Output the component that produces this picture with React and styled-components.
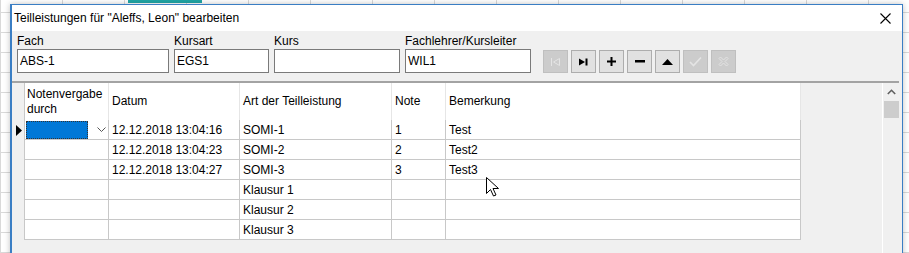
import React from "react";
import styled, { createGlobalStyle } from "styled-components";

const GlobalStyle = createGlobalStyle`
  html, body {
    margin: 0;
    padding: 0;
    background: #ffffff;
    overflow: hidden;
  }
  body {
    font-family: "Liberation Sans", Arial, sans-serif;
    font-size: 12px;
    color: #000;
  }
`;

const Desktop = styled.div`
  position: relative;
  width: 909px;
  height: 253px;
  overflow: hidden;
  padding: 4px 6px 0 10px;
  box-sizing: border-box;
  background-color: #ffffff;
  background-image:
    linear-gradient(90deg, transparent 128px, #21a6a6 128px, #21a6a6 202px, transparent 202px),
    repeating-linear-gradient(0deg, #d9d9d9 0 1px, transparent 1px 20px),
    repeating-linear-gradient(90deg, #d9d9d9 0 1px, transparent 1px 62px);
  background-size: 909px 3px, 909px 253px, 909px 253px;
  background-repeat: no-repeat;
`;

const Dialog = styled.div`
  height: 260px;
  border: 1px solid #3a7ec4;
  border-left-width: 2px;
  background: #f0f0f0;
  display: flex;
  flex-direction: column;
  box-shadow: 0 0 6px rgba(0, 0, 0, 0.25);
`;

const TitleBar = styled.div`
  height: 26px;
  background: #ffffff;
  display: flex;
  align-items: center;
  justify-content: space-between;
  padding: 0 11px 0 2px;
  flex-shrink: 0;
`;

const Title = styled.span`
  font-size: 12px;
`;

const Fields = styled.div`
  display: flex;
  align-items: flex-end;
  gap: 5px;
  padding: 3px 0 0 5px;
`;

const Field = styled.div`
  display: flex;
  flex-direction: column;
  width: ${(p) => p.$w}px;
`;

const Label = styled.div`
  height: 15px;
  line-height: 15px;
`;

const Input = styled.div`
  height: 24px;
  box-sizing: border-box;
  border: 1px solid #7a7a7a;
  background: #fff;
  padding: 0 2px;
  display: flex;
  align-items: center;
`;

const Toolbar = styled.div`
  display: flex;
  gap: 3px;
  margin-left: 7px;
`;

const ToolButton = styled.div`
  width: 25px;
  height: 23px;
  box-sizing: border-box;
  border: 1px solid ${(p) => (p.$disabled ? "#bfbfbf" : "#adadad")};
  background: ${(p) => (p.$disabled ? "#cccccc" : "#e1e1e1")};
  display: flex;
  align-items: center;
  justify-content: center;
`;

const GridControl = styled.div`
  margin: 8px 3px 0 0;
  border-top: 2px solid #a3a3a3;
  display: flex;
  flex: 1;
  min-height: 0;
  background: #f0f0f0;
`;

const RowHeaders = styled.div`
  width: 12px;
  display: flex;
  flex-direction: column;
`;

const RowHeader = styled.div`
  height: ${(p) => p.$h}px;
  display: flex;
  align-items: center;
  justify-content: flex-start;
  padding-left: 4px;
`;

const Table = styled.div`
  display: grid;
  grid-template-columns: 84px 131px 152px 54px 355px;
  grid-auto-rows: 20px;
  grid-template-rows: 37px;
  border-left: 1px solid #c8c8c8;
  align-self: flex-start;
  background: #fff;
`;

const HeadCell = styled.div`
  border-right: 1px solid #e6e6e6;
  display: flex;
  align-items: center;
  padding: 0 1px 0 ${(p) => (p.$first ? 2 : 3)}px;
  line-height: 15px;
  background: #fff;
`;

const Cell = styled.div`
  border-right: 1px solid #c8c8c8;
  border-bottom: 1px solid #c8c8c8;
  display: flex;
  align-items: center;
  padding-left: 3px;
  white-space: nowrap;
  overflow: hidden;
`;

const ComboCell = styled.div`
  border-right: 1px solid #c8c8c8;
  border-bottom: 1px solid #c8c8c8;
  display: flex;
  align-items: center;
  padding: 1px 0 1px 1px;
`;

const Selected = styled.div`
  width: 60px;
  height: 16px;
  background: #0078d7;
  border: 1px dotted #333;
`;

const Chevron = styled.div`
  flex: 1;
  display: flex;
  justify-content: center;
  padding-left: 6px;
`;

const Filler = styled.div`
  flex: 1;
`;

const Scrollbar = styled.div`
  width: 16px;
  border-left: 1px solid #ffffff;
  background: #f0f0f0;
  display: flex;
  flex-direction: column;
  align-items: center;
`;

const ScrollArrow = styled.div`
  height: 18px;
  display: flex;
  align-items: center;
  justify-content: center;
`;

const Thumb = styled.div`
  width: 15px;
  height: 17px;
  background: #cdcdcd;
`;

const Cursor = styled.svg`
  position: absolute;
  left: 486px;
  top: 177px;
`;

const CloseIcon = () => (
  <svg width="11" height="11" viewBox="0 0 11 11">
    <path d="M0.5 0.5L10.5 10.5M10.5 0.5L0.5 10.5" stroke="#000" strokeWidth="1.1" />
  </svg>
);

const icons = {
  first: (
    <svg width="11" height="10" viewBox="0 0 11 10">
      <path d="M1.5 1V9M9.5 1.5L3.5 5L9.5 8.5Z" stroke="#e4e4e4" strokeWidth="1" fill="none" />
    </svg>
  ),
  last: (
    <svg width="11" height="10" viewBox="0 0 11 10">
      <path d="M1 1.5L7 5L1 8.5Z" fill="#000" />
      <rect x="7.5" y="1.5" width="2" height="7" fill="#000" />
    </svg>
  ),
  plus: (
    <svg width="9" height="9" viewBox="0 0 9 9">
      <path d="M3.5 0H5.5V3.5H9V5.5H5.5V9H3.5V5.5H0V3.5H3.5Z" fill="#000" />
    </svg>
  ),
  minus: (
    <svg width="10" height="3" viewBox="0 0 10 3">
      <rect width="10" height="2.5" fill="#000" />
    </svg>
  ),
  up: (
    <svg width="11" height="6" viewBox="0 0 11 6">
      <path d="M5.5 0L11 6H0Z" fill="#000" />
    </svg>
  ),
  check: (
    <svg width="13" height="11" viewBox="0 0 13 11">
      <path d="M1 6L4.5 9.5L12 1.5" stroke="#e4e4e4" strokeWidth="1.6" fill="none" />
    </svg>
  ),
  cancel: (
    <svg width="11" height="11" viewBox="0 0 11 11">
      <path
        d="M1 2.5L2.5 1L5.5 4L8.5 1L10 2.5L7 5.5L10 8.5L8.5 10L5.5 7L2.5 10L1 8.5L4 5.5Z"
        stroke="#e4e4e4"
        strokeWidth="1"
        fill="none"
      />
    </svg>
  ),
};

const buttons = [
  ["first", true],
  ["last", false],
  ["plus", false],
  ["minus", false],
  ["up", false],
  ["check", true],
  ["cancel", true],
];

const fields = [
  { label: "Fach", value: "ABS-1", w: 152 },
  { label: "Kursart", value: "EGS1", w: 95 },
  { label: "Kurs", value: "", w: 126 },
  { label: "Fachlehrer/Kursleiter", value: "WIL1", w: 126 },
];

const headers = ["Notenvergabe durch", "Datum", "Art der Teilleistung", "Note", "Bemerkung"];

const rows = [
  ["12.12.2018 13:04:16", "SOMI-1", "1", "Test"],
  ["12.12.2018 13:04:23", "SOMI-2", "2", "Test2"],
  ["12.12.2018 13:04:27", "SOMI-3", "3", "Test3"],
  ["", "Klausur 1", "", ""],
  ["", "Klausur 2", "", ""],
  ["", "Klausur 3", "", ""],
];

export default function App() {
  return (
    <>
      <GlobalStyle />
      <Desktop>
        <Dialog>
          <TitleBar>
            <Title>Teilleistungen für "Aleffs, Leon" bearbeiten</Title>
            <CloseIcon />
          </TitleBar>

          <Fields>
            {fields.map((f) => (
              <Field key={f.label} $w={f.w}>
                <Label>{f.label}</Label>
                <Input>{f.value}</Input>
              </Field>
            ))}
            <Toolbar>
              {buttons.map(([name, disabled]) => (
                <ToolButton key={name} $disabled={disabled}>
                  {icons[name]}
                </ToolButton>
              ))}
            </Toolbar>
          </Fields>

          <GridControl>
            <RowHeaders>
              <RowHeader $h={37} />
              <RowHeader $h={20}>
                <svg width="6" height="11" viewBox="0 0 6 11">
                  <path d="M0 0L6 5.5L0 11Z" fill="#000" />
                </svg>
              </RowHeader>
            </RowHeaders>

            <Table>
              {headers.map((h, i) => (
                <HeadCell key={h} $first={i === 0}>
                  {h}
                </HeadCell>
              ))}
              {rows.map((r, ri) => (
                <React.Fragment key={ri}>
                  {ri === 0 ? (
                    <ComboCell>
                      <Selected />
                      <Chevron>
                        <svg width="9" height="5" viewBox="0 0 9 5">
                          <path d="M0.5 0.5L4.5 4.5L8.5 0.5" stroke="#555" strokeWidth="1" fill="none" />
                        </svg>
                      </Chevron>
                    </ComboCell>
                  ) : (
                    <Cell />
                  )}
                  {r.map((c, ci) => (
                    <Cell key={ci}>{c}</Cell>
                  ))}
                </React.Fragment>
              ))}
            </Table>

            <Filler />

            <Scrollbar>
              <ScrollArrow>
                <svg width="9" height="6" viewBox="0 0 9 6">
                  <path d="M0.8 5L4.5 1.3L8.2 5" stroke="#606060" strokeWidth="1.6" fill="none" />
                </svg>
              </ScrollArrow>
              <Thumb />
            </Scrollbar>
          </GridControl>
        </Dialog>

        <Cursor width="13" height="20" viewBox="0 0 13 20">
          <path
            d="M0.5 0.5V16.5L4.5 12.5L7.5 19L10 18L7 11.5H12.5Z"
            fill="#fff"
            stroke="#000"
            strokeWidth="1"
            strokeLinejoin="miter"
          />
        </Cursor>
      </Desktop>
    </>
  );
}
